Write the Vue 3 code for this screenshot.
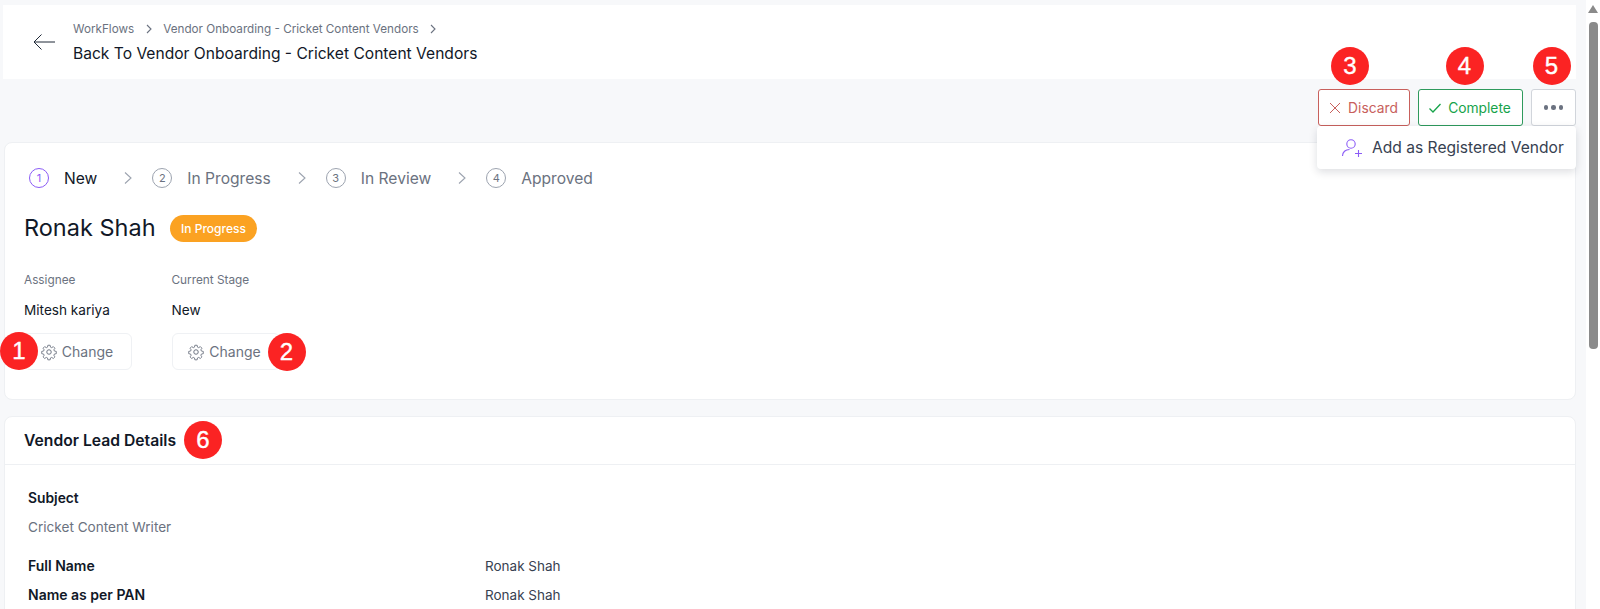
<script setup>
const steps = [
  { num: 1, label: "New", active: true },
  { num: 2, label: "In Progress" },
  { num: 3, label: "In Review" },
  { num: 4, label: "Approved" },
];

const fields = [
  { label: "Full Name", value: "Ronak Shah" },
  { label: "Name as per PAN", value: "Ronak Shah" },
];
</script>

<template>
  <div class="shell">
    <main class="page">
      <header class="topbar">
        <svg class="back" width="24" height="18" viewBox="0 0 24 18" fill="none" stroke="#1f2937" stroke-width="1">
          <path d="M23 9H2M9.5 1.5L2 9l7.5 7.5" />
        </svg>
        <div class="crumbs">
          <div class="crumb-row">
            <span>WorkFlows</span>
            <svg class="crumb-sep" width="8" height="10" viewBox="0 0 8 10" fill="none" stroke="#6b7280" stroke-width="1.1"><path d="M2 1l4 4-4 4" /></svg>
            <span>Vendor Onboarding - Cricket Content Vendors</span>
            <svg class="crumb-sep" width="8" height="10" viewBox="0 0 8 10" fill="none" stroke="#6b7280" stroke-width="1.1"><path d="M2 1l4 4-4 4" /></svg>
          </div>
          <div class="back-title">Back To Vendor Onboarding - Cricket Content Vendors</div>
        </div>
      </header>

      <div class="actions">
        <div class="action-wrap">
          <span class="marker marker-3">3</span>
          <button type="button" class="btn btn-discard">
            <svg width="14" height="14" viewBox="0 0 14 14" fill="none" stroke="#c8605c" stroke-width="1"><path d="M2 2l10 10M12 2L2 12" /></svg>
            Discard
          </button>
        </div>
        <div class="action-wrap">
          <span class="marker marker-4">4</span>
          <button type="button" class="btn btn-complete">
            <svg width="14" height="14" viewBox="0 0 14 14" fill="none" stroke="#16a34a" stroke-width="1.3"><path d="M1.5 7.5l3.5 3.5 7.5-8" /></svg>
            Complete
          </button>
        </div>
        <div class="action-wrap">
          <span class="marker marker-5">5</span>
          <button type="button" class="btn btn-more" aria-label="More">
            <i></i><i></i><i></i>
          </button>
        </div>
        <div class="menu">
          <svg width="22" height="20" viewBox="0 0 22 20" fill="none" stroke="#8b5cf6" stroke-width="1.1">
            <circle cx="10" cy="6" r="4.2" />
            <path d="M1.5 18c0-4 3-6.5 7-6.5M14 15.5h7M17.5 12v7" />
          </svg>
          <span>Add as Registered Vendor</span>
        </div>
      </div>

      <section class="card summary">
        <ol class="steps">
          <li v-for="(step, i) in steps" :key="step.num" class="step" :class="{ active: step.active }">
            <svg v-if="i > 0" class="step-sep" width="10" height="14" viewBox="0 0 10 14" fill="none" stroke="#9ca3af" stroke-width="1.1"><path d="M2 1.5L8 7l-6 5.5" /></svg>
            <span class="step-num">{{ step.num }}</span>
            <span class="step-label">{{ step.label }}</span>
          </li>
        </ol>

        <div class="name-row">
          <h1>Ronak Shah</h1>
          <span class="pill">In Progress</span>
        </div>

        <div class="meta">
          <div class="meta-col">
            <div class="meta-label">Assignee</div>
            <div class="meta-value">Mitesh kariya</div>
            <div class="change-wrap">
              <span class="marker marker-left">1</span>
              <button type="button" class="change">
                <svg width="18" height="18" viewBox="0 0 24 24" fill="none" stroke="#6b7280" stroke-width="1.3"><circle cx="12" cy="12" r="3" /><path d="M10.3 2.5h3.4l.5 2.8 1.8.8 2.4-1.6 2.4 2.4-1.6 2.4.8 1.8 2.8.5v3.4l-2.8.5-.8 1.8 1.6 2.4-2.4 2.4-2.4-1.6-1.8.8-.5 2.8h-3.4l-.5-2.8-1.8-.8-2.4 1.6-2.4-2.4 1.6-2.4-.8-1.8-2.8-.5v-3.4l2.8-.5.8-1.8-1.6-2.4 2.4-2.4 2.4 1.6 1.8-.8z" transform="translate(12 12) scale(.9) translate(-12 -12.5)" /></svg>
                Change
              </button>
            </div>
          </div>
          <div class="meta-col">
            <div class="meta-label">Current Stage</div>
            <div class="meta-value">New</div>
            <div class="change-wrap">
              <button type="button" class="change">
                <svg width="18" height="18" viewBox="0 0 24 24" fill="none" stroke="#6b7280" stroke-width="1.3"><circle cx="12" cy="12" r="3" /><path d="M10.3 2.5h3.4l.5 2.8 1.8.8 2.4-1.6 2.4 2.4-1.6 2.4.8 1.8 2.8.5v3.4l-2.8.5-.8 1.8 1.6 2.4-2.4 2.4-2.4-1.6-1.8.8-.5 2.8h-3.4l-.5-2.8-1.8-.8-2.4 1.6-2.4-2.4 1.6-2.4-.8-1.8-2.8-.5v-3.4l2.8-.5.8-1.8-1.6-2.4 2.4-2.4 2.4 1.6 1.8-.8z" transform="translate(12 12) scale(.9) translate(-12 -12.5)" /></svg>
                Change
              </button>
              <span class="marker marker-right">2</span>
            </div>
          </div>
        </div>
      </section>

      <section class="card details">
        <div class="details-head">
          <h2>Vendor Lead Details</h2>
          <span class="marker marker-inline">6</span>
        </div>
        <div class="details-body">
          <div class="subject-label">Subject</div>
          <div class="subject-value">Cricket Content Writer</div>
          <div v-for="field in fields" :key="field.label" class="field">
            <span class="field-label">{{ field.label }}</span>
            <span class="field-value">{{ field.value }}</span>
          </div>
        </div>
      </section>
    </main>

    <div class="scrollbar">
      <div class="arrow"></div>
      <div class="thumb"></div>
    </div>
  </div>
</template>

<style>
html,
body {
  margin: 0;
  overflow: hidden;
}
</style>

<style scoped>
.shell {
  display: flex;
  width: 1600px;
  height: 609px;
  overflow: hidden;
  background: #f7f8fa;
  font-family: Inter, "Liberation Sans", sans-serif;
  color: #111827;
}

.page {
  width: 1586px;
  padding: 5px 10px 0 4px;
  box-sizing: border-box;
  flex: none;
}

.topbar {
  display: flex;
  align-items: center;
  height: 74px;
  margin-left: -1px;
  padding-left: 29px;
  background: #fff;
}

.back {
  margin-right: 17px;
}

.crumbs {
  display: flex;
  flex-direction: column;
  gap: 8px;
}

.crumb-row {
  display: flex;
  align-items: center;
  font-size: 11.7px;
  color: #6b7280;
}

.crumb-sep {
  margin: 0 10.5px;
}

.back-title {
  font-size: 15.6px;
  color: #111827;
}

.actions {
  position: relative;
  display: flex;
  justify-content: flex-end;
  gap: 8px;
  height: 63px;
  padding-top: 10px;
  box-sizing: border-box;
}

.action-wrap {
  position: relative;
}

.btn {
  display: flex;
  align-items: center;
  justify-content: center;
  gap: 6px;
  height: 37px;
  box-sizing: border-box;
  background: #fff;
  border-radius: 3px;
  font-family: inherit;
  font-size: 13.8px;
  padding: 0 2px 0 0;
}

.btn-discard {
  width: 92px;
  border: 1px solid #c8605c;
  color: #c8605c;
}

.btn-complete {
  width: 105px;
  border: 1px solid #2e9a5c;
  color: #16a34a;
}

.btn-more {
  width: 45px;
  gap: 3px;
  padding: 0;
  border: 1px solid #d1d5db;
}

.btn-more i {
  width: 4.5px;
  height: 4.5px;
  border-radius: 50%;
  background: #6b7280;
}

.marker {
  position: absolute;
  z-index: 2;
  display: flex;
  align-items: center;
  justify-content: center;
  width: 38px;
  height: 38px;
  border-radius: 50%;
  background: #fb2323;
  color: #fff;
  font-family: "Liberation Sans", sans-serif;
  font-size: 24px;
  -webkit-text-stroke: 0.4px #fff;
}

.marker-3,
.marker-4,
.marker-5 {
  top: -42px;
  left: 50%;
}

.marker-3 {
  margin-left: -33px;
}

.marker-4 {
  margin-left: -25px;
}

.marker-5 {
  margin-left: -21px;
}

.menu {
  position: absolute;
  z-index: 3;
  top: 47px;
  right: 0;
  width: 259px;
  height: 43px;
  display: flex;
  align-items: center;
  gap: 9px;
  box-sizing: border-box;
  padding-left: 24px;
  background: #fff;
  border-radius: 4px;
  box-shadow: 0 3px 8px rgba(17, 24, 39, 0.14);
  font-size: 15.6px;
  color: #374151;
}

.card {
  background: #fff;
  border: 1px solid #eef0f3;
  border-radius: 8px;
}

.summary {
  height: 258px;
  box-sizing: border-box;
  padding: 23px 19px 0;
}

.steps {
  display: flex;
  align-items: center;
  list-style: none;
  margin: 0;
  padding: 0 0 0 5px;
}

.step {
  display: flex;
  align-items: center;
  height: 24px;
  font-size: 15.6px;
  color: #6b7280;
}

.step.active {
  color: #111827;
}

.step-sep {
  margin: 0 19px 0 26px;
}

.step-num {
  display: flex;
  align-items: center;
  justify-content: center;
  width: 20px;
  height: 20px;
  box-sizing: border-box;
  margin-right: 15px;
  border: 1px solid #9ca3af;
  border-radius: 50%;
  font-size: 11px;
  color: #6b7280;
}

.active .step-num {
  border-color: #8b5cf6;
  color: #8b5cf6;
}

.name-row {
  display: flex;
  align-items: center;
  gap: 14px;
  margin-top: 24px;
}

.name-row h1 {
  margin: 0;
  font-size: 23.5px;
  font-weight: 400;
  line-height: 28px;
}

.pill {
  display: flex;
  align-items: center;
  height: 27px;
  padding: 0 11.5px;
  border-radius: 14px;
  background: #fba222;
  color: #fff;
  font-size: 12px;
  font-weight: 500;
}

.meta {
  display: flex;
  margin-top: 30px;
}

.meta-col {
  width: 147.5px;
}

.meta-label {
  font-size: 11.8px;
  line-height: 16px;
  color: #6b7280;
}

.meta-value {
  margin-top: 13px;
  font-size: 13.6px;
  line-height: 18px;
  color: #111827;
}

.change-wrap {
  position: relative;
  margin-top: 14px;
  width: 108px;
}

.change {
  display: flex;
  align-items: center;
  justify-content: center;
  gap: 4px;
  width: 108px;
  height: 37px;
  padding: 0 3px 0 0;
  background: #fff;
  border: 1px solid #eff1f4;
  border-radius: 6px;
  font-family: inherit;
  font-size: 14px;
  color: #6b7280;
}

.marker-left {
  top: -1px;
  left: -24px;
}

.marker-right {
  top: 0;
  left: 96px;
}

.details {
  margin-top: 16px;
  height: 240px;
  box-sizing: border-box;
}

.details-head {
  position: relative;
  display: flex;
  align-items: center;
  height: 47px;
  padding-left: 19px;
  border-bottom: 1px solid #eef0f3;
}

.details-head h2 {
  margin: 0;
  font-size: 15.7px;
  font-weight: 600;
}

.marker-inline {
  top: 4px;
  left: 179px;
}

.details-body {
  padding: 24px 23px 0;
}

.subject-label {
  font-size: 13.8px;
  font-weight: 600;
  line-height: 18px;
}

.subject-value {
  margin-top: 11px;
  font-size: 13.6px;
  line-height: 18px;
  color: #6b7280;
}

.field {
  display: flex;
  align-items: center;
  height: 29px;
  font-size: 14px;
}

.subject-value + .field {
  margin-top: 15px;
}

.field-label {
  width: 457px;
  font-weight: 600;
}

.field-value {
  font-size: 13.5px;
  color: #374151;
}

.scrollbar {
  flex: none;
  width: 14px;
  position: relative;
  background: #fff;
}

.arrow {
  position: absolute;
  top: 5px;
  left: 2px;
  width: 0;
  height: 0;
  border-left: 5.5px solid transparent;
  border-right: 5.5px solid transparent;
  border-bottom: 8px solid #8a8a8a;
}

.thumb {
  position: absolute;
  top: 22px;
  left: 3px;
  width: 9px;
  height: 327px;
  border-radius: 4px;
  background: #8a8a8a;
}
</style>
